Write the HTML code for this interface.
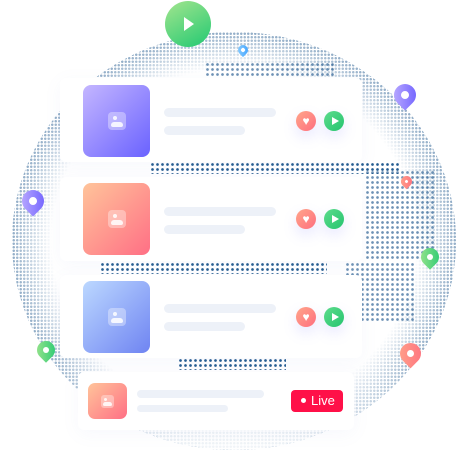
<!DOCTYPE html>
<html><head><meta charset="utf-8"><style>
*{margin:0;padding:0;box-sizing:border-box}
body{width:462px;height:468px;background:#fff;position:relative;overflow:hidden;font-family:"Liberation Sans",sans-serif}
.globe{position:absolute;z-index:0;left:12px;top:32px;width:444px;height:418px;border-radius:50%;overflow:hidden;
background:radial-gradient(circle,#0d4a84 1px,transparent 1.5px) 0 0/3.5px 3.5px}
.globe:after{content:"";position:absolute;left:0;top:0;right:0;bottom:0;background:radial-gradient(ellipse at 50% 50%,#fff 0,#fff 58%,rgba(255,255,255,.5) 72%,rgba(255,255,255,.15) 85%,rgba(255,255,255,.1) 97%,rgba(255,255,255,.5) 100%)}
.globe:before{content:"";position:absolute;left:0;right:0;bottom:0;height:90px;z-index:1;background:linear-gradient(180deg,rgba(255,255,255,0),rgba(255,255,255,.9))}
.band{position:absolute;background:radial-gradient(circle,#0d4a84 1.1px,transparent 1.6px) 0 0/5px 5px;opacity:.9}
.card{position:absolute;background:#fff;border-radius:6px;box-shadow:0 4px 18px rgba(120,130,200,.06)}
.th{position:absolute;border-radius:8px}
.th i{position:absolute;left:50%;top:50%;width:18px;height:18px;margin:-9px 0 0 -9px;border-radius:4px;background:rgba(255,255,255,.35)}
.th i:before{content:"";position:absolute;left:5px;top:4px;width:4px;height:4px;border-radius:50%;background:rgba(255,255,255,.85)}
.th i:after{content:"";position:absolute;left:3px;bottom:3px;width:12px;height:5px;border-radius:3px 3px 2px 2px;background:rgba(255,255,255,.85)}
.th i.s{width:13px;height:13px;margin:-6.5px 0 0 -6.5px;border-radius:3px}
.th i.s:before{left:3px;top:3px;width:3px;height:3px}
.th i.s:after{left:2px;bottom:2px;width:9px;height:4px}
.ln{position:absolute;height:9px;border-radius:5px;background:#edf1f8}
.b{position:absolute;width:20px;height:20px;border-radius:50%;box-shadow:0 6px 14px rgba(120,120,255,.18)}
.h{background:linear-gradient(135deg,#ffa58a,#ff6f7f)}
.p{background:linear-gradient(135deg,#5edc8c,#25c46f)}
.h:after{content:"♥";position:absolute;left:0;right:0;top:3px;text-align:center;color:#fff;font-size:12px;line-height:14px}
.p:after{content:"";position:absolute;left:8px;top:6px;border-left:7px solid #fff;border-top:4px solid transparent;border-bottom:4px solid transparent}
.pin{position:absolute;border-radius:50% 50% 50% 0;transform:rotate(-45deg)}
.pin:after{content:"";position:absolute;left:50%;top:50%;width:36%;height:36%;margin:-18% 0 0 -18%;border-radius:50%;background:#fff}
</style></head><body>
<div class="globe"></div>
<div class="band" style="left:150px;top:162px;width:250px;height:12px"></div>
<div class="band" style="left:205px;top:62px;width:130px;height:16px;opacity:.6"></div>
<div class="band" style="left:100px;top:262px;width:227px;height:12px"></div>
<div class="band" style="left:345px;top:262px;width:70px;height:60px;opacity:.6"></div>
<div class="band" style="left:365px;top:170px;width:70px;height:90px;opacity:.6"></div>
<div class="band" style="left:178px;top:358px;width:108px;height:12px"></div>

<div class="card" style="left:60px;top:78px;width:302px;height:84px"></div>
<div class="card" style="left:60px;top:177px;width:302px;height:84px"></div>
<div class="card" style="left:60px;top:275px;width:302px;height:83px"></div>
<div class="card" style="left:78px;top:372px;width:276px;height:58px"></div>

<div class="th" style="left:83px;top:85px;width:67px;height:72px;background:linear-gradient(135deg,#c4b6ff,#6a62ff)"><i></i></div>
<div class="ln" style="left:164px;top:108px;width:112px"></div>
<div class="ln" style="left:164px;top:126px;width:81px"></div>
<div class="b h" style="left:296px;top:111px"></div><div class="b p" style="left:324px;top:111px"></div>

<div class="th" style="left:83px;top:183px;width:67px;height:72px;background:linear-gradient(135deg,#ffc49a,#ff6f85)"><i></i></div>
<div class="ln" style="left:164px;top:207px;width:112px"></div>
<div class="ln" style="left:164px;top:225px;width:81px"></div>
<div class="b h" style="left:296px;top:209px"></div><div class="b p" style="left:324px;top:209px"></div>

<div class="th" style="left:83px;top:281px;width:67px;height:72px;background:linear-gradient(135deg,#bcd8ff,#6f84f2)"><i></i></div>
<div class="ln" style="left:164px;top:304px;width:112px"></div>
<div class="ln" style="left:164px;top:322px;width:81px"></div>
<div class="b h" style="left:296px;top:307px"></div><div class="b p" style="left:324px;top:307px"></div>

<div class="th" style="left:88px;top:383px;width:39px;height:36px;border-radius:7px;background:linear-gradient(135deg,#ffc49a,#ff6f85)"><i class="s"></i></div>
<div class="ln" style="left:137px;top:390px;width:127px;height:8px"></div>
<div class="ln" style="left:137px;top:405px;width:91px;height:7px"></div>
<div style="position:absolute;left:291px;top:390px;width:52px;height:22px;border-radius:4px;background:#ff1048;color:#fff;font-size:13px;line-height:22px;padding-left:20px">Live<span style="position:absolute;left:10px;top:8px;width:5px;height:5px;border-radius:50%;background:#fff"></span></div>

<div style="position:absolute;left:165px;top:1px;width:46px;height:46px;border-radius:50%;background:linear-gradient(150deg,#a3e58e,#22c972)"><span style="position:absolute;left:19px;top:16px;border-left:10px solid #fff;border-top:7px solid transparent;border-bottom:7px solid transparent"></span></div>

<div class="pin" style="left:22px;top:190px;width:22px;height:22px;background:linear-gradient(135deg,#c2b2ff,#6a5cff)"></div>
<div class="pin" style="left:394px;top:84px;width:22px;height:22px;background:linear-gradient(135deg,#c2b2ff,#6a5cff)"></div>
<div class="pin" style="left:37px;top:341px;width:18px;height:18px;background:linear-gradient(135deg,#a3e58e,#22c972)"></div>
<div class="pin" style="left:421px;top:248px;width:18px;height:18px;background:linear-gradient(135deg,#a3e58e,#22c972)"></div>
<div class="pin" style="left:400px;top:343px;width:21px;height:21px;background:linear-gradient(135deg,#ffa58a,#ff6f7f)"></div>
<div class="pin" style="left:401px;top:176px;width:11px;height:11px;background:linear-gradient(135deg,#ffa58a,#ff6f7f)"></div>
<div class="pin" style="left:238px;top:45px;width:10px;height:10px;background:linear-gradient(135deg,#8fd0ff,#3aa0ff)"></div>
</body></html>
